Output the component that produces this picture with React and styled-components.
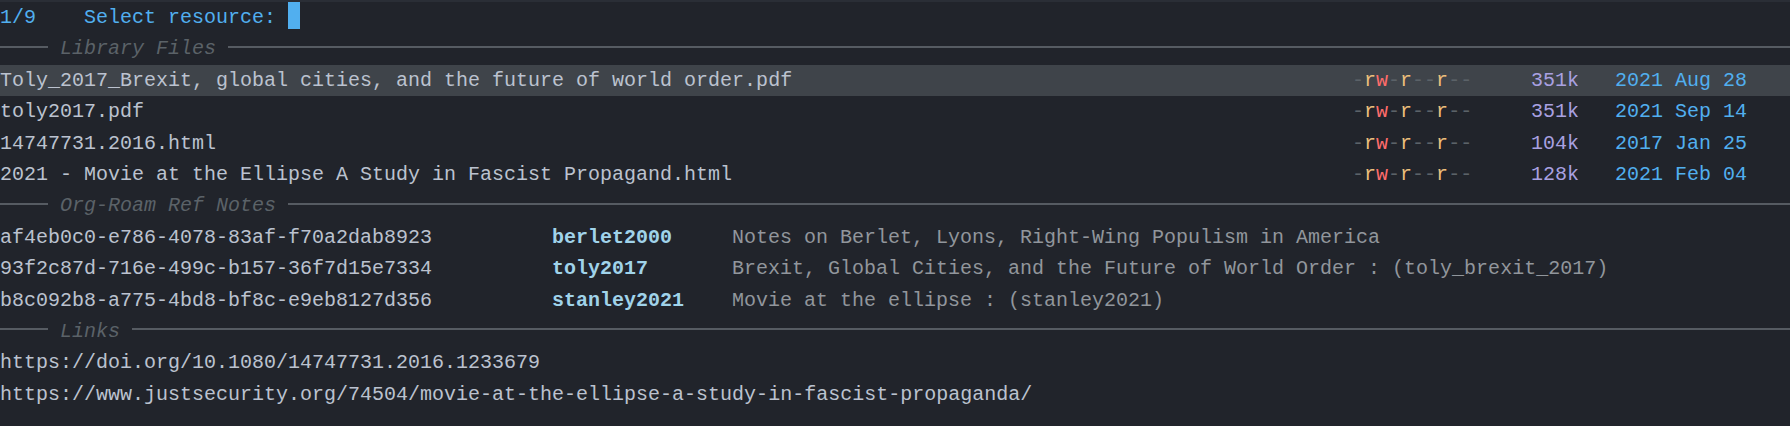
import React from "react";
import styled, { createGlobalStyle } from "styled-components";

const GlobalStyle = createGlobalStyle`
  html, body {
    margin: 0;
    padding: 0;
    background: #21242b;
  }
`;

const Minibuffer = styled.div`
  height: 424px;
  border-top: 2px solid #2a2e36;
  background: #21242b;
  color: #bbc2cf;
  font-family: "Liberation Mono", "DejaVu Sans Mono", monospace;
  font-size: 20px;
  line-height: 31.4px;
  white-space: pre;
  overflow: hidden;
`;

const PromptLine = styled.div`
  height: 31.4px;
  color: #51afef;
`;

const Cursor = styled.span`
  display: inline-block;
  width: 12px;
  height: 27px;
  vertical-align: top;
  background: #51afef;
`;

const GroupHeader = styled.div`
  display: flex;
  align-items: center;
  height: 31.4px;
`;

const Rule = styled.div`
  height: 2px;
  margin-bottom: 5px;
  background: #565b62;
  width: ${(p) => (p.$grow ? "auto" : "48px")};
  flex: ${(p) => (p.$grow ? "1" : "none")};
`;

const GroupTitle = styled.span`
  padding: 0 12px;
  font-style: italic;
  color: #5b6268;
`;

const FileRow = styled.div`
  display: grid;
  grid-template-columns: 1352px 179px 84px 1fr;
  height: 31.4px;
  background: ${(p) => (p.$current ? "#3f444a" : "transparent")};
`;

const PermChar = styled.span`
  color: ${(p) =>
    p.$c === "r" ? "#ecbe7b" : p.$c === "w" ? "#ff6c6b" : "#5b6268"};
`;

const Size = styled.span`
  color: #a9a1e1;
`;

const Date = styled.span`
  color: #51afef;
`;

const NoteRow = styled.div`
  display: grid;
  grid-template-columns: 552px 180px 1fr;
  height: 31.4px;
`;

const NoteKey = styled.span`
  font-weight: bold;
  color: #a0d3ea;
`;

const NoteTitle = styled.span`
  color: #91969c;
`;

const LinkRow = styled.div`
  height: 31.4px;
`;

const files = [
  {
    name: "Toly_2017_Brexit, global cities, and the future of world order.pdf",
    size: "351k",
    date: "2021 Aug 28",
  },
  { name: "toly2017.pdf", size: "351k", date: "2021 Sep 14" },
  { name: "14747731.2016.html", size: "104k", date: "2017 Jan 25" },
  {
    name: "2021 - Movie at the Ellipse A Study in Fascist Propagand.html",
    size: "128k",
    date: "2021 Feb 04",
  },
];

const notes = [
  {
    id: "af4eb0c0-e786-4078-83af-f70a2dab8923",
    key: "berlet2000",
    title: "Notes on Berlet, Lyons, Right-Wing Populism in America",
  },
  {
    id: "93f2c87d-716e-499c-b157-36f7d15e7334",
    key: "toly2017",
    title:
      "Brexit, Global Cities, and the Future of World Order : (toly_brexit_2017)",
  },
  {
    id: "b8c092b8-a775-4bd8-bf8c-e9eb8127d356",
    key: "stanley2021",
    title: "Movie at the ellipse : (stanley2021)",
  },
];

const links = [
  "https://doi.org/10.1080/14747731.2016.1233679",
  "https://www.justsecurity.org/74504/movie-at-the-ellipse-a-study-in-fascist-propaganda/",
];

const Header = ({ title }) => (
  <GroupHeader>
    <Rule />
    <GroupTitle>{title}</GroupTitle>
    <Rule $grow />
  </GroupHeader>
);

const Perms = ({ value }) => (
  <span>
    {value.split("").map((c, i) => (
      <PermChar key={i} $c={c}>
        {c}
      </PermChar>
    ))}
  </span>
);

const App = () => {
  return (
    <>
      <GlobalStyle />
      <Minibuffer>
        <PromptLine>
          {"1/9    Select resource: "}
          <Cursor />
        </PromptLine>

        <Header title="Library Files" />
        {files.map((f, i) => (
          <FileRow key={f.name} $current={i === 0}>
            <span>{f.name}</span>
            <Perms value="-rw-r--r--" />
            <Size>{f.size}</Size>
            <Date>{f.date}</Date>
          </FileRow>
        ))}

        <Header title="Org-Roam Ref Notes" />
        {notes.map((n) => (
          <NoteRow key={n.id}>
            <span>{n.id}</span>
            <NoteKey>{n.key}</NoteKey>
            <NoteTitle>{n.title}</NoteTitle>
          </NoteRow>
        ))}

        <Header title="Links" />
        {links.map((l) => (
          <LinkRow key={l}>{l}</LinkRow>
        ))}
      </Minibuffer>
    </>
  );
};

export default App;
